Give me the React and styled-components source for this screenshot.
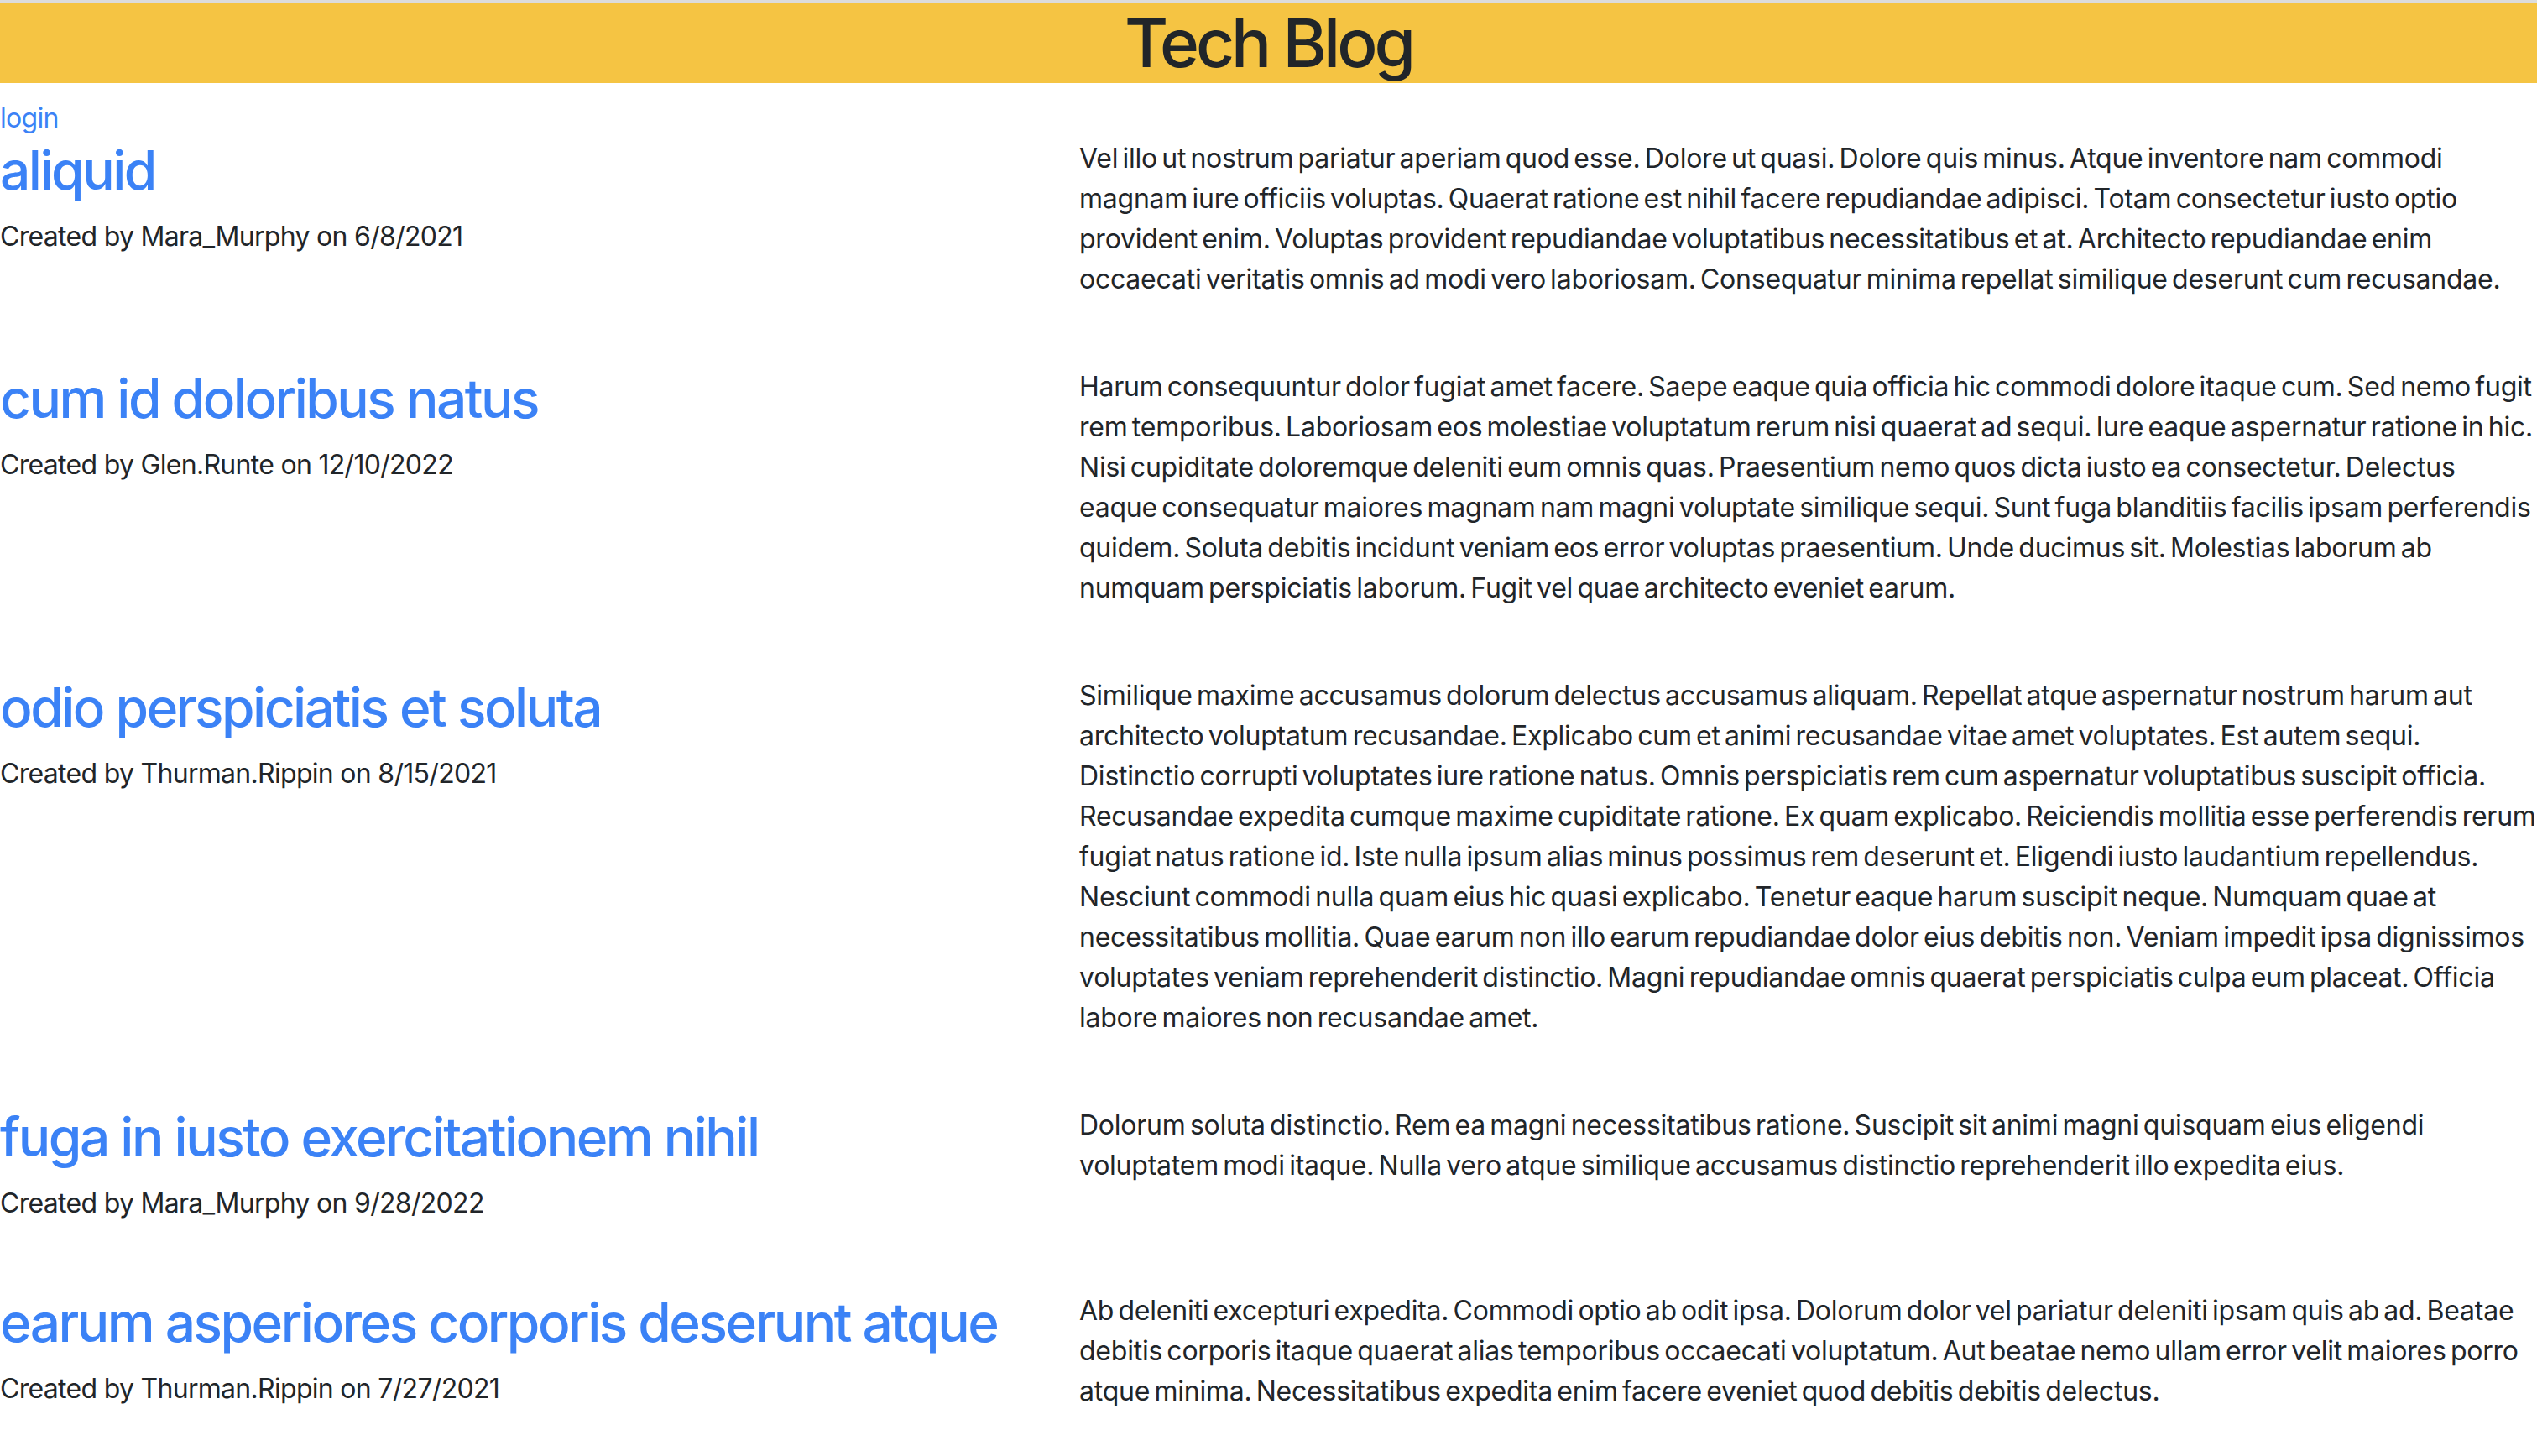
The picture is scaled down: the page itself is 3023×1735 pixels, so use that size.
import React from "react";
import styled, { createGlobalStyle } from "styled-components";

const GlobalStyle = createGlobalStyle`
  html { scrollbar-width: none; }
  html::-webkit-scrollbar { display: none; }
  body {
    margin: 0;
    background: #ffffff;
    color: #212529;
    font-family: Inter, "Noto Sans", "Liberation Sans", sans-serif;
    font-size: 32px;
    line-height: 1.5;
  }
`;

const Page = styled.div`
  display: flex;
  flex-direction: column;
`;

const Header = styled.header`
  background: #f5c443;
  border-top: 3px solid #dcdcdc;
  margin-bottom: 18px;
  display: flex;
  justify-content: center;
`;

const Title = styled.h1`
  margin: 0;
  font-size: 80px;
  font-weight: 500;
  line-height: 96px;
  letter-spacing: -4px;
  color: #212529;
`;

const Nav = styled.div`
  display: flex;
`;

const NavLink = styled.a`
  color: #3b82f6;
  text-decoration: none;
  font-size: 32px;
  line-height: 48px;
  letter-spacing: -0.7px;
`;

const PostList = styled.main`
  display: flex;
  flex-direction: column;
`;

const PostRow = styled.article`
  display: grid;
  grid-template-columns: 1286px minmax(0, 1fr);
  align-items: start;
  margin-bottom: 48px;
`;

const PostHead = styled.div`
  display: flex;
  flex-direction: column;
`;

const PostTitle = styled.a`
  color: #3b82f6;
  text-decoration: none;
  font-size: 64px;
  font-weight: 500;
  line-height: 76.8px;
  margin-bottom: 16px;
  letter-spacing: -2.5px;
`;

const Meta = styled.p`
  margin: 0 0 32px;
  font-size: 32px;
  line-height: 48px;
  color: #212529;
  letter-spacing: -0.7px;
`;

const Body = styled.p`
  margin: 0 0 32px;
  font-size: 32px;
  line-height: 48px;
  color: #212529;
  letter-spacing: -0.23px;
  word-spacing: -3.5px;
`;

const posts = [
  {
    title: "aliquid",
    author: "Mara_Murphy",
    date: "6/8/2021",
    body: "Vel illo ut nostrum pariatur aperiam quod esse. Dolore ut quasi. Dolore quis minus. Atque inventore nam commodi magnam iure officiis voluptas. Quaerat ratione est nihil facere repudiandae adipisci. Totam consectetur iusto optio provident enim. Voluptas provident repudiandae voluptatibus necessitatibus et at. Architecto repudiandae enim occaecati veritatis omnis ad modi vero laboriosam. Consequatur minima repellat similique deserunt cum recusandae.",
  },
  {
    title: "cum id doloribus natus",
    author: "Glen.Runte",
    date: "12/10/2022",
    body: "Harum consequuntur dolor fugiat amet facere. Saepe eaque quia officia hic commodi dolore itaque cum. Sed nemo fugit rem temporibus. Laboriosam eos molestiae voluptatum rerum nisi quaerat ad sequi. Iure eaque aspernatur ratione in hic. Nisi cupiditate doloremque deleniti eum omnis quas. Praesentium nemo quos dicta iusto ea consectetur. Delectus eaque consequatur maiores magnam nam magni voluptate similique sequi. Sunt fuga blanditiis facilis ipsam perferendis quidem. Soluta debitis incidunt veniam eos error voluptas praesentium. Unde ducimus sit. Molestias laborum ab numquam perspiciatis laborum. Fugit vel quae architecto eveniet earum.",
  },
  {
    title: "odio perspiciatis et soluta",
    author: "Thurman.Rippin",
    date: "8/15/2021",
    body: "Similique maxime accusamus dolorum delectus accusamus aliquam. Repellat atque aspernatur nostrum harum aut architecto voluptatum recusandae. Explicabo cum et animi recusandae vitae amet voluptates. Est autem sequi. Distinctio corrupti voluptates iure ratione natus. Omnis perspiciatis rem cum aspernatur voluptatibus suscipit officia. Recusandae expedita cumque maxime cupiditate ratione. Ex quam explicabo. Reiciendis mollitia esse perferendis rerum fugiat natus ratione id. Iste nulla ipsum alias minus possimus rem deserunt et. Eligendi iusto laudantium repellendus. Nesciunt commodi nulla quam eius hic quasi explicabo. Tenetur eaque harum suscipit neque. Numquam quae at necessitatibus mollitia. Quae earum non illo earum repudiandae dolor eius debitis non. Veniam impedit ipsa dignissimos voluptates veniam reprehenderit distinctio. Magni repudiandae omnis quaerat perspiciatis culpa eum placeat. Officia labore maiores non recusandae amet.",
  },
  {
    title: "fuga in iusto exercitationem nihil",
    author: "Mara_Murphy",
    date: "9/28/2022",
    body: "Dolorum soluta distinctio. Rem ea magni necessitatibus ratione. Suscipit sit animi magni quisquam eius eligendi voluptatem modi itaque. Nulla vero atque similique accusamus distinctio reprehenderit illo expedita eius.",
  },
  {
    title: "earum asperiores corporis deserunt atque",
    author: "Thurman.Rippin",
    date: "7/27/2021",
    body: "Ab deleniti excepturi expedita. Commodi optio ab odit ipsa. Dolorum dolor vel pariatur deleniti ipsam quis ab ad. Beatae debitis corporis itaque quaerat alias temporibus occaecati voluptatum. Aut beatae nemo ullam error velit maiores porro atque minima. Necessitatibus expedita enim facere eveniet quod debitis debitis delectus.",
  },
];

export default function App() {
  return (
    <Page>
      <GlobalStyle />
      <Header>
        <Title>Tech Blog</Title>
      </Header>
      <Nav>
        <NavLink href="#">login</NavLink>
      </Nav>
      <PostList>
        {posts.map((p) => (
          <PostRow key={p.title}>
            <PostHead>
              <PostTitle href="#">{p.title}</PostTitle>
              <Meta>
                Created by {p.author} on {p.date}
              </Meta>
            </PostHead>
            <Body>{p.body}</Body>
          </PostRow>
        ))}
      </PostList>
    </Page>
  );
}
